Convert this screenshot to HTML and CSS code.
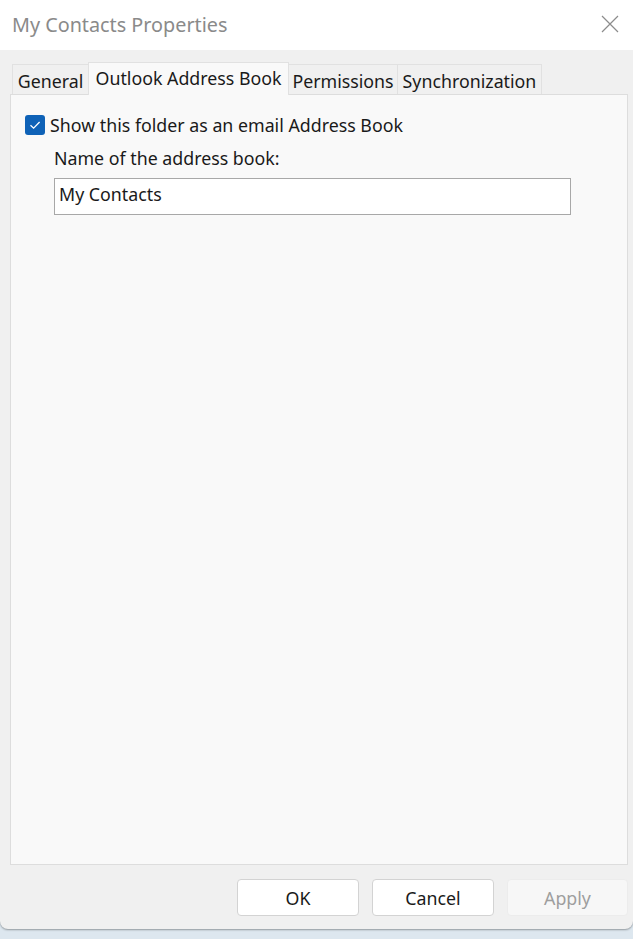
FILE: index.html
```html
<!DOCTYPE html>
<html>
<head>
<meta charset="utf-8">
<link rel="stylesheet" href="styles.css">
</head>
<body>
<div class="window">
  <div class="titlebar">
    <span class="title">My Contacts Properties</span>
    <svg class="close" width="18" height="18" viewBox="0 0 18 18"><path d="M1 1 L17 17 M17 1 L1 17" stroke="#8c8c8c" stroke-width="1.2" fill="none"/></svg>
  </div>
  <div class="content">
    <div class="tabs">
      <div class="tab t-general">General</div>
      <div class="tab active t-oab">Outlook Address Book</div>
      <div class="tab t-perm">Permissions</div>
      <div class="tab t-sync">Synchronization</div>
    </div>
    <div class="panel">
      <label class="check-row">
        <span class="checkbox"><svg width="20" height="20" viewBox="0 0 20 20"><path d="M5.5 10.2 L8.6 13.2 L14.6 7" stroke="#fff" stroke-width="1.3" fill="none"/></svg></span>
        <span class="check-label">Show this folder as an email Address Book</span>
      </label>
      <div class="field">
        <div class="field-label">Name of the address book:</div>
        <div class="input">My Contacts</div>
      </div>
    </div>
    <div class="buttons">
      <div class="btn">OK</div>
      <div class="btn">Cancel</div>
      <div class="btn disabled">Apply</div>
    </div>
  </div>
</div>
</body>
</html>
```

FILE: styles.css
```css
html, body {
  margin: 0;
  padding: 0;
}
body {
  width: 633px;
  height: 939px;
  background: #dde7ef;
  font-family: "Noto Sans", "Open Sans", sans-serif;
  color: #1a1a1a;
  overflow: hidden;
}
.window {
  width: 633px;
  height: 929px;
  background: #f0f0f0;
  border-radius: 0 0 8px 8px;
  box-shadow: 0 1px 2px rgba(0,0,0,0.35);
  display: flex;
  flex-direction: column;
}
.titlebar {
  height: 50px;
  background: #ffffff;
  display: flex;
  align-items: center;
  justify-content: space-between;
  padding: 0 14px 0 12px;
  flex: none;
}
.title {
  font-size: 19.8px;
  color: #8a8a8a;
  margin-top: -1px;
}
.close {
  margin-top: -3px;
}
.content {
  padding: 12px 5px 0 10px;
  display: flex;
  flex-direction: column;
  flex: 1;
}
.tabs {
  display: flex;
  align-items: flex-end;
  height: 32px;
  padding-left: 2px;
  position: relative;
  z-index: 1;
}
.tab {
  height: 30px;
  box-sizing: border-box;
  border: 1px solid #e1e1e1;
  border-bottom: none;
  background: #f0f0f0;
  font-size: 17.8px;
  display: flex;
  align-items: center;
  justify-content: center;
  padding-top: 2px;
  color: #1a1a1a;
  white-space: nowrap;
}
.t-general { width: 76px; border-right: none; }
.t-oab { width: 201px; }
.t-perm { width: 109px; border-left: none; }
.t-sync { width: 144px; border-left: none; }
.tab.active {
  height: 33px;
  margin-bottom: -1px;
  background: #f9f9f9;
  padding-top: 0;
  padding-bottom: 3px;
}
.panel {
  height: 771px;
  border: 1px solid #dddddd;
  background: #f9f9f9;
  box-sizing: border-box;
  padding: 20px 0 0 14px;
}
.check-row {
  display: flex;
  align-items: center;
  gap: 5px;
  height: 20px;
}
.checkbox {
  width: 20px;
  height: 20px;
  border-radius: 3px;
  background: #0f62b7;
  display: block;
  flex: none;
}
.checkbox svg { display: block; }
.check-label {
  font-size: 17.8px;
  margin-top: -1px;
}
.field {
  margin-left: 29px;
  margin-top: 11px;
}
.field-label {
  font-size: 17.8px;
  height: 24px;
  line-height: 24px;
}
.input {
  margin-top: 8px;
  width: 517px;
  height: 37px;
  box-sizing: border-box;
  border: 1px solid #a8a8a8;
  background: #ffffff;
  font-size: 17.8px;
  padding-left: 4px;
  line-height: 31px;
}
.buttons {
  display: flex;
  justify-content: flex-end;
  gap: 13px;
  padding-top: 14px;
}
.btn {
  width: 122px;
  height: 37px;
  box-sizing: border-box;
  border: 1px solid #d3d3d3;
  border-radius: 4px;
  background: #ffffff;
  font-size: 17.8px;
  display: flex;
  align-items: center;
  justify-content: center;
  color: #1a1a1a;
}
.btn.disabled {
  width: 121px;
  background: #f7f7f7;
  border-color: #ececec;
  color: #9e9e9e;
}
```
